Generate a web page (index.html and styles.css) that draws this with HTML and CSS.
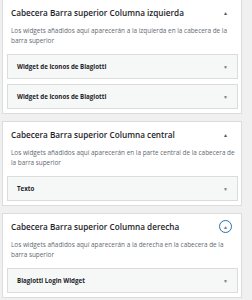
FILE: index.html
```html
<!DOCTYPE html>
<html lang="es">
<head>
    <meta charset="UTF-8">
    <meta name="viewport" content="width=device-width, initial-scale=1.0">
    <title>Widgets</title>
    <link rel="stylesheet" href="styles.css">
</head>
<body>
    <div class="sidebars">
        <div class="sidebar">
            <div class="sidebar-head">
                <h2>Cabecera Barra superior Columna izquierda</h2>
                <span class="toggle">&#9650;</span>
            </div>
            <p class="description">Los widgets añadidos aquí aparecerán a la izquierda en la cabecera de la barra superior</p>
            <div class="widget">
                <h3>Widget de iconos de Biagiotti</h3>
                <span class="arrow">&#9660;</span>
            </div>
            <div class="widget">
                <h3>Widget de iconos de Biagiotti</h3>
                <span class="arrow">&#9660;</span>
            </div>
        </div>

        <div class="sidebar">
            <div class="sidebar-head">
                <h2>Cabecera Barra superior Columna central</h2>
                <span class="toggle">&#9650;</span>
            </div>
            <p class="description">Los widgets añadidos aquí aparecerán en la parte central de la cabecera de la barra superior</p>
            <div class="widget">
                <h3>Texto</h3>
                <span class="arrow">&#9660;</span>
            </div>
        </div>

        <div class="sidebar">
            <div class="sidebar-head">
                <h2>Cabecera Barra superior Columna derecha</h2>
                <span class="toggle focused">&#9650;</span>
            </div>
            <p class="description">Los widgets añadidos aquí aparecerán a la derecha en la cabecera de la barra superior</p>
            <div class="widget">
                <h3>Biagiotti Login Widget</h3>
                <span class="arrow">&#9660;</span>
            </div>
        </div>
    </div>
</body>
</html>
```

FILE: styles.css
```css
* {
    box-sizing: border-box;
    font-family: 'Open Sans', 'Noto Sans', sans-serif;
}
body {
    margin: 0;
    padding: 0;
    background-color: #f0f0f1;
    color: #1d2327;
}
.sidebars {
    margin: -1px 10px 0 2px;
    display: flex;
    flex-direction: column;
    gap: 7px;
}
.sidebar {
    background: #fff;
    border: 1px solid #dcdcde;
    padding: 0 3px 4px 4px;
}
.sidebar-head {
    display: flex;
    justify-content: space-between;
    align-items: center;
    height: 19px;
    padding: 6px 6px 0 4px;
}
.sidebar-head h2 {
    margin: 0;
    font-size: 8.2px;
    line-height: 12px;
    font-weight: 600;
    color: #1d2327;
}
.toggle {
    font-size: 5px;
    color: #50575e;
    width: 13px;
    height: 13px;
    display: flex;
    align-items: center;
    justify-content: center;
}
.toggle.focused {
    border: 1.5px solid #2271b1;
    border-radius: 50%;
    color: #787c82;
}
.description {
    margin: 7px 0 8px 4px;
    font-size: 6.4px;
    line-height: 10px;
    color: #646970;
}
.widget {
    display: flex;
    justify-content: space-between;
    align-items: center;
    height: 25px;
    background: #f6f7f7;
    border: 1px solid #dcdcde;
    padding: 0 9px 0 9px;
    margin-bottom: 5px;
}
.widget:last-child {
    margin-bottom: 0;
}
.widget h3 {
    margin: 0;
    font-size: 6.2px;
    font-weight: 700;
}
.arrow {
    font-size: 5px;
    color: #787c82;
}
```
